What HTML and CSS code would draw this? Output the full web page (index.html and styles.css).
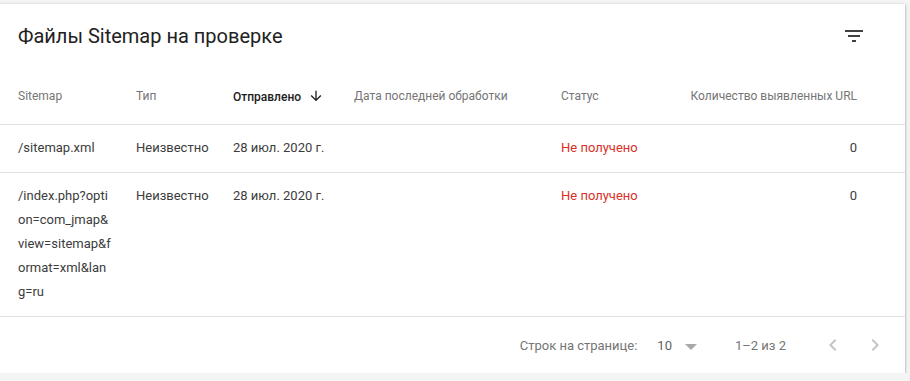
FILE: index.html
```html
<!DOCTYPE html>
<html lang="ru">
<head>
  <meta charset="UTF-8">
  <title>Файлы Sitemap на проверке</title>
  <link rel="stylesheet" href="styles.css">
</head>
<body>

  <div class="card">
    <div class="card-head">
      <h2>Файлы Sitemap на проверке</h2>
      <button class="filter-btn" title="Фильтр">
        <svg width="24" height="24" viewBox="0 0 24 24"><path d="M10 18h4v-2h-4v2zM3 6v2h18V6H3zm3 7h12v-2H6v2z" fill="#424242"/></svg>
      </button>
    </div>

    <table class="sitemaps">
      <thead>
        <tr>
          <th class="c-map">Sitemap</th>
          <th class="c-type">Тип</th>
          <th class="c-sent sorted">Отправлено
            <svg width="16" height="16" viewBox="0 0 24 24"><path d="M20 12l-1.41-1.41L13 16.17V4h-2v12.17l-5.58-5.59L4 12l8 8 8-8z" fill="#212121"/></svg>
          </th>
          <th class="c-date">Дата последней обработки</th>
          <th class="c-status">Статус</th>
          <th class="c-count">Количество выявленных URL</th>
        </tr>
      </thead>
      <tbody>
        <tr>
          <td class="c-map">/sitemap.xml</td>
          <td>Неизвестно</td>
          <td>28 июл. 2020 г.</td>
          <td></td>
          <td class="err">Не получено</td>
          <td class="c-count">0</td>
        </tr>
        <tr>
          <td class="c-map">/index.php?option=com_jmap&amp;view=sitemap&amp;format=xml&amp;lang=ru</td>
          <td>Неизвестно</td>
          <td>28 июл. 2020 г.</td>
          <td></td>
          <td class="err">Не получено</td>
          <td class="c-count">0</td>
        </tr>
      </tbody>
    </table>

    <div class="pager">
      <span class="pager-label">Строк на странице:</span>
      <span class="pager-size">10 <span class="caret"></span></span>
      <span class="pager-range">1–2 из 2</span>
      <button class="pager-nav">
        <svg width="24" height="24" viewBox="0 0 24 24"><path d="M15.41 7.41L14 6l-6 6 6 6 1.41-1.41L10.83 12z" fill="#c4c4c4"/></svg>
      </button>
      <button class="pager-nav">
        <svg width="24" height="24" viewBox="0 0 24 24"><path d="M10 6L8.59 7.41 13.17 12l-4.58 4.59L10 18l6-6z" fill="#c4c4c4"/></svg>
      </button>
    </div>
  </div>

</body>
</html>
```

FILE: styles.css
```css
/* Общие стили */
body {
  margin: 0;
  background: #f4f4f4;
  font-family: Roboto, "Liberation Sans", sans-serif;
  color: #3c3c3c;
}

.card {
  background: #fff;
  margin: 4px 0 0 -4px;
  width: 909px;
  height: 369px;
  box-shadow: 0 1px 3px rgba(0, 0, 0, 0.35), 0 1px 1px rgba(0, 0, 0, 0.15);
  display: flex;
  flex-direction: column;
}

.card-head {
  height: 64px;
  display: flex;
  align-items: center;
  justify-content: space-between;
  padding: 0 39px 0 22px;
}

.card-head h2 {
  margin: 0;
  font-size: 20px;
  font-weight: 400;
  color: #212121;
}

.filter-btn, .pager-nav {
  background: none;
  border: none;
  padding: 0;
  display: flex;
  cursor: pointer;
}

/* Таблица */
.sitemaps {
  border-collapse: collapse;
  table-layout: fixed;
  width: 100%;
}

.sitemaps th, .sitemaps td {
  padding: 0 0 0 18px;
  text-align: left;
  vertical-align: top;
}

.sitemaps th {
  height: 56px;
  vertical-align: middle;
  font-size: 12px;
  font-weight: 400;
  color: #757575;
  border-bottom: 1px solid #e0e0e0;
}

.sitemaps th.sorted {
  color: #212121;
  font-weight: 500;
}

.sitemaps th.sorted svg {
  vertical-align: -3px;
  margin-left: 4px;
}

.sitemaps td {
  font-size: 13px;
  line-height: 24px;
  padding-top: 11px;
  padding-bottom: 12px;
  border-bottom: 1px solid #e0e0e0;
}

.sitemaps .c-map {
  width: 93px;
  padding-left: 22px;
  padding-right: 7px;
  word-break: break-all;
}
.sitemaps th:nth-child(2) { width: 79px; }
.sitemaps th:nth-child(3) { width: 103px; }
.sitemaps th:nth-child(4) { width: 189px; }
.sitemaps th:nth-child(5) { width: 111px; }

.sitemaps .c-count {
  text-align: right;
  padding-right: 48px;
}

.sitemaps td.err {
  color: #d93025;
}

/* Пагинация */
.pager {
  flex: 1;
  display: flex;
  align-items: center;
  justify-content: flex-end;
  padding-right: 18px;
  font-size: 13px;
  color: #757575;
}

.pager-size {
  margin-left: 20px;
  color: #616161;
  display: flex;
  align-items: center;
}

.caret {
  width: 0;
  height: 0;
  border-left: 6px solid transparent;
  border-right: 6px solid transparent;
  border-top: 6px solid #a8a8a8;
  margin-left: 13px;
  margin-top: 3px;
}

.pager-range {
  margin: 0 35px 0 38px;
}

.pager-nav + .pager-nav {
  margin-left: 18px;
}
```
